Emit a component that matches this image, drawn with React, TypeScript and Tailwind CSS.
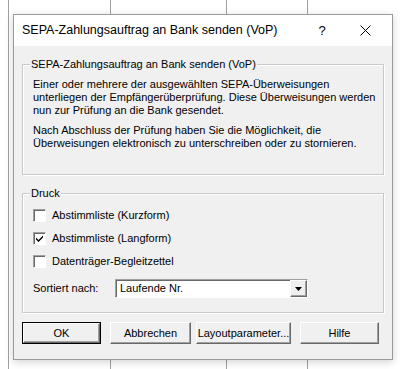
import React from 'react';

const font = { fontFamily: '"Liberation Sans", Arial, sans-serif' };

const Bevel = ({ children, className = '' }: { children: React.ReactNode; className?: string }) => (
  <div
    className={
      'flex items-center justify-center border border-t-white border-l-white border-r-[#696969] border-b-[#696969] bg-[#f0f0f0] shadow-[inset_-1px_-1px_0_#a0a0a0] ' +
      className
    }
  >
    {children}
  </div>
);

const GroupBox = ({ title, className = '', children }: { title: string; className?: string; children: React.ReactNode }) => (
  <div className={'relative border border-[#c9c9c9] shadow-[1px_1px_0_#fff,inset_1px_1px_0_#fff] ' + className}>
    <span className="absolute -top-[8px] left-[7px] bg-[#f0f0f0] px-[1px] leading-[14px]">{title}</span>
    {children}
  </div>
);

const Check = ({ label, checked }: { label: string; checked?: boolean }) => (
  <div className="flex items-center h-[23px]">
    <div className="w-[13px] h-[13px] bg-white border border-t-[#a0a0a0] border-l-[#a0a0a0] border-r-white border-b-white shadow-[inset_1px_1px_0_#696969] flex items-center justify-center">
      {checked && (
        <svg width="9" height="9" viewBox="0 0 9 9">
          <path d="M1 3.5 L3.5 6 L8 1.5 L8 3.5 L3.5 8 L1 5.5 Z" fill="#000" />
        </svg>
      )}
    </div>
    <span className="ml-[6px]">{label}</span>
  </div>
);

export default function App() {
  return (
    <div className="relative w-[400px] h-[369px] bg-white overflow-hidden text-black" style={font}>
      {/* underlying grid */}
      <div className="absolute left-[8px] top-0 h-full w-px bg-[#a0a0a0]" />
      <div className="absolute left-[110px] top-0 h-full w-px bg-[#a0a0a0]" />
      <div className="absolute left-[226px] top-0 h-full w-px bg-[#a0a0a0]" />
      <div className="absolute left-[307px] top-0 h-full w-px bg-[#a0a0a0]" />

      {/* dialog */}
      <div className="absolute left-[13px] top-[14px] w-[380px] h-[346px] border border-[#9a9a9a] bg-[#f0f0f0] flex flex-col shadow-[0_2px_8px_rgba(0,0,0,0.18)]">
        <div className="h-[31px] bg-white flex items-center pl-[8px] text-[12.5px]">
          <span className="flex-1">SEPA-Zahlungsauftrag an Bank senden (VoP)</span>
          <span className="w-[20px] text-center text-[13px] mr-[28px]">?</span>
          <svg width="11" height="11" viewBox="0 0 11 11" className="mr-[21px]">
            <path d="M0.5 0.5 L10.5 10.5 M10.5 0.5 L0.5 10.5" stroke="#000" strokeWidth="1" />
          </svg>
        </div>

        <div className="flex-1 flex flex-col px-[8px] pt-[18px] text-[11px]">
          <GroupBox title="SEPA-Zahlungsauftrag an Bank senden (VoP)" className="h-[111px]">
            <div className="pl-[10px] pt-[13px] leading-[13px] whitespace-nowrap">
              <p>
                Einer oder mehrere der ausgewählten SEPA-Überweisungen
                <br />
                unterliegen der Empfängerüberprüfung. Diese Überweisungen werden
                <br />
                nun zur Prüfung an die Bank gesendet.
              </p>
              <p className="mt-[7px]">
                Nach Abschluss der Prüfung haben Sie die Möglichkeit, die
                <br />
                Überweisungen elektronisch zu unterschreiben oder zu stornieren.
              </p>
            </div>
          </GroupBox>

          <GroupBox title="Druck" className="mt-[18px] h-[120px]">
            <div className="pl-[10px] pt-[10px]">
              <Check label="Abstimmliste (Kurzform)" />
              <Check label="Abstimmliste (Langform)" checked />
              <Check label="Datenträger-Begleitzettel" />
              <div className="flex items-center mt-[6px]">
                <span className="w-[82px]">Sortiert nach:</span>
                <div className="w-[193px] h-[19px] bg-white border border-t-[#a0a0a0] border-l-[#a0a0a0] border-r-white border-b-white shadow-[inset_1px_1px_0_#696969] flex items-center">
                  <span className="flex-1 pl-[4px]">Laufende Nr.</span>
                  <Bevel className="w-[17px] h-[17px] mr-0">
                    <svg width="7" height="4" viewBox="0 0 7 4">
                      <path d="M0 0 H7 L3.5 4 Z" fill="#000" />
                    </svg>
                  </Bevel>
                </div>
              </div>
            </div>
          </GroupBox>

          <div className="flex mt-[9px] gap-[9px]">
            <div className="border border-[#000] w-[79px] h-[22px] flex">
              <Bevel className="flex-1">OK</Bevel>
            </div>
            <Bevel className="w-[81px] h-[22px]">Abbrechen</Bevel>
            <Bevel className="w-[95px] h-[22px] -ml-[4px]">Layoutparameter...</Bevel>
            <Bevel className="w-[79px] h-[22px]">Hilfe</Bevel>
          </div>
        </div>
      </div>
    </div>
  );
}
